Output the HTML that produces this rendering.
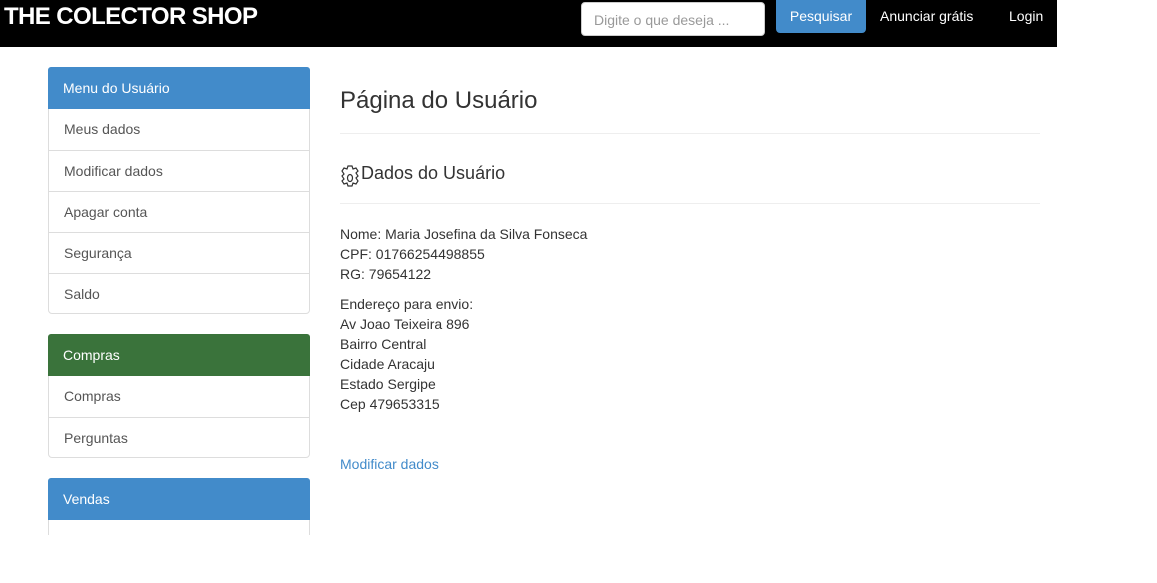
<!DOCTYPE html>
<html><head><meta charset="utf-8"><style>
body{margin:0;width:1157px;height:583px;background:#fff;font-family:"Liberation Sans",sans-serif;position:relative;overflow:hidden}
.nav{position:absolute;left:0;top:0;width:1057px;height:47px;background:#000}
.logo{position:absolute;left:4px;top:3px;color:#fff;font-size:24px;font-weight:bold;letter-spacing:-0.6px}
.search{position:absolute;left:581px;top:2px;width:184px;height:34px;border:1px solid #ccc;border-radius:4px;background:#fff;box-sizing:border-box;color:#999;font-size:14px;padding:9px 12px}
.btn{position:absolute;left:776px;top:0;width:90px;height:33px;background:#428bca;border-radius:0 0 4px 4px;color:#fff;font-size:14px;text-align:center;line-height:33px}
.nl{position:absolute;top:8px;color:#fff;font-size:14px}
.clip{position:absolute;left:0;top:47px;width:1157px;height:488px;overflow:hidden}
.panel{position:absolute;left:48px;width:262px;border:1px solid #ddd;border-radius:4px;box-sizing:border-box}
.ph{height:42px;color:#fff;font-size:14px;line-height:42px;padding-left:15px;border-radius:3px 3px 0 0;margin:-1px -1px 0}
.it{height:41px;line-height:40px;padding-left:15px;color:#555;font-size:14px;border-top:1px solid #ddd;box-sizing:border-box}
.main{position:absolute;left:340px;color:#333}
hr{position:absolute;left:340px;width:700px;border:0;border-top:1px solid #eee;margin:0}
.txt{font-size:14px;line-height:20px}
</style></head><body>
<div class="nav">
<div class="logo">THE COLECTOR SHOP</div>
<div class="search">Digite o que deseja ...</div>
<div class="btn">Pesquisar</div>
<div class="nl" style="left:880px">Anunciar grátis</div>
<div class="nl" style="left:1009px">Login</div>
</div>
<div class="clip">
<div class="panel" style="top:20px;height:247px"><div class="ph" style="background:#428bca">Menu do Usuário</div>
<div class="it" style="border-top:none">Meus dados</div><div class="it">Modificar dados</div><div class="it">Apagar conta</div><div class="it">Segurança</div><div class="it">Saldo</div></div>
<div class="panel" style="top:287px;height:124px"><div class="ph" style="background:#3a733b">Compras</div>
<div class="it" style="border-top:none">Compras</div><div class="it">Perguntas</div></div>
<div class="panel" style="top:431px;height:124px"><div class="ph" style="background:#428bca">Vendas</div>
<div class="it" style="border-top:none">Anúncios</div></div>
<div class="main" style="top:40px;font-size:24px">Página do Usuário</div>
<hr style="top:86px">
<svg style="position:absolute;left:339px;top:117px" width="22" height="28" viewBox="0 0 22 28"><path d="M9 2h4l1 3 3-1 2 3-2 2 2 3-2 2 2 3-2 3-3-1-1 3H9l-1-3-3 1-2-3 2-2-2-3 2-2-2-3 2-3 3 1z" fill="none" stroke="#333" stroke-width="1.2"/><ellipse cx="11" cy="14" rx="2.5" ry="3.5" fill="none" stroke="#333" stroke-width="1.2"/></svg>
<div class="main" style="top:116px;left:361px;font-size:18px">Dados do Usuário</div>
<hr style="top:156px">
<div class="main txt" style="top:177px">Nome: Maria Josefina da Silva Fonseca<br>CPF: 01766254498855<br>RG: 79654122</div>
<div class="main txt" style="top:247px">Endereço para envio:<br>Av Joao Teixeira 896<br>Bairro Central<br>Cidade Aracaju<br>Estado Sergipe<br>Cep 479653315</div>
<div class="main txt" style="top:407px;color:#428bca">Modificar dados</div>
</div>
</body></html>
